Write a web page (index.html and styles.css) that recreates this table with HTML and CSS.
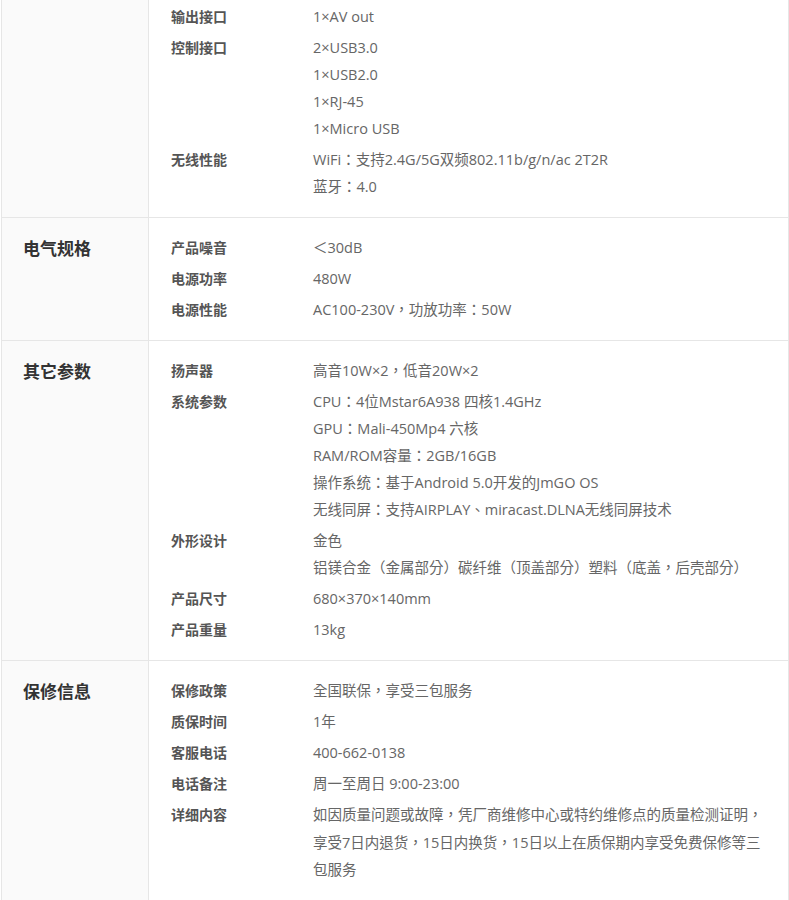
FILE: index.html
```html
<!DOCTYPE html>
<html>
<head>
    <meta charset="utf-8">
    <title>产品参数</title>
    <link rel="stylesheet" href="styles.css">
</head>
<body>
    <div class="specs">
        <section class="group group-first">
            <div class="group-title"></div>
            <dl class="group-body">
                <div class="row"><dt>输出接口</dt><dd>1×AV out</dd></div>
                <div class="row"><dt>控制接口</dt><dd>2×USB3.0<br>1×USB2.0<br>1×RJ-45<br>1×Micro USB</dd></div>
                <div class="row"><dt>无线性能</dt><dd>WiFi：支持2.4G/5G双频802.11b/g/n/ac 2T2R<br>蓝牙：4.0</dd></div>
            </dl>
        </section>
        <section class="group">
            <div class="group-title">电气规格</div>
            <dl class="group-body">
                <div class="row"><dt>产品噪音</dt><dd>＜30dB</dd></div>
                <div class="row"><dt>电源功率</dt><dd>480W</dd></div>
                <div class="row"><dt>电源性能</dt><dd>AC100-230V，功放功率：50W</dd></div>
            </dl>
        </section>
        <section class="group">
            <div class="group-title">其它参数</div>
            <dl class="group-body">
                <div class="row"><dt>扬声器</dt><dd>高音10W×2，低音20W×2</dd></div>
                <div class="row"><dt>系统参数</dt><dd>CPU：4位Mstar6A938 四核1.4GHz<br>GPU：Mali-450Mp4 六核<br>RAM/ROM容量：2GB/16GB<br>操作系统：基于Android 5.0开发的JmGO OS<br>无线同屏：支持AIRPLAY、miracast.DLNA无线同屏技术</dd></div>
                <div class="row"><dt>外形设计</dt><dd>金色<br>铝镁合金（金属部分）碳纤维（顶盖部分）塑料（底盖，后壳部分）</dd></div>
                <div class="row"><dt>产品尺寸</dt><dd>680×370×140mm</dd></div>
                <div class="row"><dt>产品重量</dt><dd>13kg</dd></div>
            </dl>
        </section>
        <section class="group group-service">
            <div class="group-title">保修信息</div>
            <dl class="group-body">
                <div class="row"><dt>保修政策</dt><dd>全国联保，享受三包服务</dd></div>
                <div class="row"><dt>质保时间</dt><dd>1年</dd></div>
                <div class="row"><dt>客服电话</dt><dd>400-662-0138</dd></div>
                <div class="row"><dt>电话备注</dt><dd>周一至周日 9:00-23:00</dd></div>
                <div class="row"><dt>详细内容</dt><dd>如因质量问题或故障，凭厂商维修中心或特约维修点的质量检测证明，<br>享受7日内退货，15日内换货，15日以上在质保期内享受免费保修等三<br>包服务</dd></div>
            </dl>
        </section>
    </div>
</body>
</html>
```

FILE: styles.css
```css
body {
    margin: 0;
    background: #fff;
    font-family: "Open Sans", "Noto Sans CJK TC", sans-serif;
    font-size: 14px;
    color: #666;
}
.specs {
    box-sizing: border-box;
    width: 788px;
    margin-left: 1px;
    border-left: 1px solid #e6e6e6;
    border-right: 1px solid #e6e6e6;
}
.group {
    display: grid;
    grid-template-columns: 147px 1fr;
    border-top: 1px solid #e6e6e6;
}
.group-first {
    border-top: 0;
}
.group-title {
    box-sizing: border-box;
    background-color: #fafafa;
    border-right: 1px solid #e6e6e6;
    color: #333;
    font-family: "Noto Sans CJK SC", sans-serif;
    font-size: 17px;
    font-weight: 700;
    line-height: 27px;
    padding: 16px 0 0 21px;
}
.group-body {
    display: flex;
    flex-direction: column;
    gap: 4px;
    margin: 0;
    padding: 16px 0 17px 22px;
}
.group-first .group-body {
    padding-top: 3px;
}
.row {
    display: grid;
    grid-template-columns: 142px 1fr;
    line-height: 27px;
}
.row dt {
    color: #555;
    font-family: "Noto Sans CJK SC", sans-serif;
    font-weight: 700;
}
.row dd {
    margin: 0;
    color: #666;
    font-size: 14.5px;
}
.group-service .row:last-child dd {
    line-height: 27.5px;
}
```
